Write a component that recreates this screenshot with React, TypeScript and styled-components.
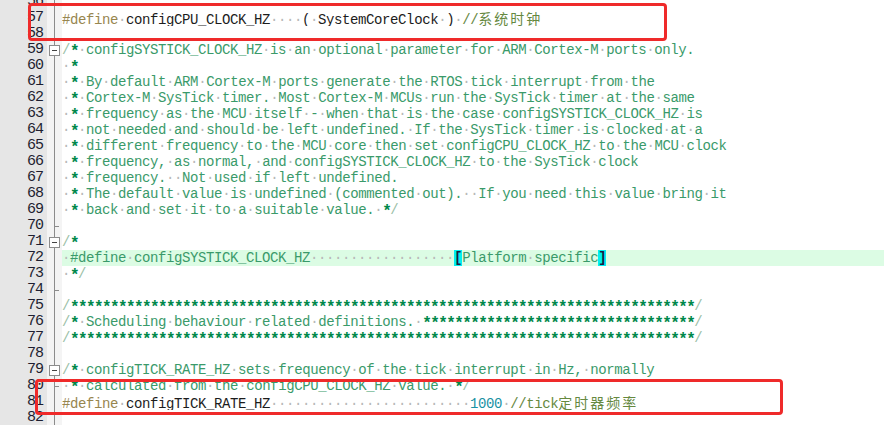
import React from "react";
import styled, { createGlobalStyle } from "styled-components";

const Global = createGlobalStyle`
  html, body { margin: 0; padding: 0; background: #ffffff; }
  body { overflow: hidden; }
`;

type Kind = "c" | "pp" | "id" | "num" | "lc" | "br";
type Seg = [Kind, string];
type Fold = "none" | "box" | "tick";

const COLORS: Record<Kind, string> = {
  c: "#3a9a6a",
  pp: "#97864f",
  id: "#1c1c1c",
  num: "#1892a4",
  lc: "#66893f",
  br: "#1a1a40",
};

const Page = styled.div`
  position: relative;
  width: 884px;
  height: 425px;
  overflow: hidden;
  background: #ffffff;
`;

const Editor = styled.div`
  display: flex;
  flex-direction: column;
  margin-top: -6px;
  font-family: "Liberation Mono", "DejaVu Sans Mono", monospace;
  font-size: 14px;
  letter-spacing: -0.4px;
`;

const Row = styled.div`
  display: grid;
  grid-template-columns: 47px 15px 1fr;
  height: 16px;
  line-height: 16px;
`;

const LineNo = styled.div`
  background: #e6e6e6;
  color: #1e1e30;
  font-size: 15px;
  letter-spacing: -1px;
  text-align: right;
  padding-right: 4px;
  white-space: pre;
`;

const FoldCell = styled.div`
  display: flex;
  align-items: center;
  background: linear-gradient(#8c8c8c, #8c8c8c) no-repeat 7px 0 / 1px 100%,
    #f4f4f4;
`;

const FoldBox = styled.div`
  box-sizing: border-box;
  width: 11px;
  height: 11px;
  margin-left: 2px;
  border: 1px solid #8c8c8c;
  background: #ffffff;
  display: flex;
  align-items: center;
  justify-content: center;
  &::after {
    content: "";
    width: 5px;
    height: 1px;
    background: #444;
  }
`;

const FoldTick = styled.div`
  width: 5px;
  height: 1px;
  margin-left: 7px;
  background: #8c8c8c;
`;

const Code = styled.div<{ $hl?: boolean }>`
  white-space: pre;
  background: ${(p) => (p.$hl ? "#dcfce4" : "transparent")};
  overflow: hidden;
`;

const Tok = styled.span<{ $kind: Kind }>`
  color: ${(p) => COLORS[p.$kind]};
`;

const Ws = styled.span`
  color: #b8b8b8;
`;

const Star = styled.span`
  position: relative;
  top: 2px;
  color: #00884a;
  font-weight: bold;
  font-size: 16px;
  letter-spacing: -1.6px;
`;

const Slash = styled.span`
  color: #9cbfa8;
`;

const Cjk = styled.span<{ $kind: Kind }>`
  font-family: "Noto Sans CJK SC", sans-serif;
  font-size: 14px;
  letter-spacing: 2px;
  color: ${(p) => COLORS[p.$kind]};
`;

const Brace = styled.span`
  display: inline-block;
  height: 16px;
  background: #00f0f0;
  color: #1a1a40;
  font-weight: bold;
`;

const Mark = styled.div<{ $l: number; $t: number; $w: number; $h: number }>`
  position: absolute;
  left: ${(p) => p.$l}px;
  top: ${(p) => p.$t}px;
  width: ${(p) => p.$w}px;
  height: ${(p) => p.$h}px;
  box-sizing: border-box;
  border: 3px solid #ef2a2a;
  border-radius: 4px;
  pointer-events: none;
`;

const isCjk = (ch: string) => /[\u3000-\u9fff\uff00-\uffef]/.test(ch);

function renderSeg(kind: Kind, text: string, key: number) {
  if (kind === "br") {
    return <Brace key={key}>{text}</Brace>;
  }
  const runs: { cls: string; s: string }[] = [];
  for (const ch of text) {
    let cls = "txt";
    if (ch === " ") cls = "ws";
    else if (isCjk(ch)) cls = "cjk";
    else if (kind === "c" && ch === "*") cls = "star";
    else if (kind === "c" && ch === "/") cls = "slash";
    const last = runs[runs.length - 1];
    if (last && last.cls === cls) last.s += ch;
    else runs.push({ cls, s: ch });
  }
  return (
    <React.Fragment key={key}>
      {runs.map((r, i) => {
        if (r.cls === "ws") return <Ws key={i}>{"·".repeat(r.s.length)}</Ws>;
        if (r.cls === "cjk")
          return (
            <Cjk key={i} $kind={kind}>
              {r.s}
            </Cjk>
          );
        if (r.cls === "star") return <Star key={i}>{r.s}</Star>;
        if (r.cls === "slash") return <Slash key={i}>{r.s}</Slash>;
        return (
          <Tok key={i} $kind={kind}>
            {r.s}
          </Tok>
        );
      })}
    </React.Fragment>
  );
}

type Line = { n: number; segs: Seg[]; fold?: Fold; hl?: boolean };

const stars = "*".repeat(78);

const LINES: Line[] = [
  { n: 56, segs: [] },
  {
    n: 57,
    segs: [
      ["pp", "#define"],
      ["id", " configCPU_CLOCK_HZ    ( SystemCoreClock ) "],
      ["lc", "//系统时钟"],
    ],
  },
  { n: 58, segs: [] },
  {
    n: 59,
    fold: "box",
    segs: [["c", "/* configSYSTICK_CLOCK_HZ is an optional parameter for ARM Cortex-M ports only."]],
  },
  { n: 60, segs: [["c", " *"]] },
  { n: 61, segs: [["c", " * By default ARM Cortex-M ports generate the RTOS tick interrupt from the"]] },
  { n: 62, segs: [["c", " * Cortex-M SysTick timer. Most Cortex-M MCUs run the SysTick timer at the same"]] },
  { n: 63, segs: [["c", " * frequency as the MCU itself - when that is the case configSYSTICK_CLOCK_HZ is"]] },
  { n: 64, segs: [["c", " * not needed and should be left undefined. If the SysTick timer is clocked at a"]] },
  { n: 65, segs: [["c", " * different frequency to the MCU core then set configCPU_CLOCK_HZ to the MCU clock"]] },
  { n: 66, segs: [["c", " * frequency, as normal, and configSYSTICK_CLOCK_HZ to the SysTick clock"]] },
  { n: 67, segs: [["c", " * frequency.  Not used if left undefined."]] },
  { n: 68, segs: [["c", " * The default value is undefined (commented out).  If you need this value bring it"]] },
  { n: 69, segs: [["c", " * back and set it to a suitable value. */"]] },
  { n: 70, fold: "tick", segs: [] },
  { n: 71, fold: "box", segs: [["c", "/*"]] },
  {
    n: 72,
    hl: true,
    segs: [
      ["c", " #define configSYSTICK_CLOCK_HZ                  "],
      ["br", "["],
      ["c", "Platform specific"],
      ["br", "]"],
    ],
  },
  { n: 73, segs: [["c", " */"]] },
  { n: 74, fold: "tick", segs: [] },
  { n: 75, segs: [["c", "/" + stars + "/"]] },
  { n: 76, segs: [["c", "/* Scheduling behaviour related definitions. " + "*".repeat(34) + "/"]] },
  { n: 77, segs: [["c", "/" + stars + "/"]] },
  { n: 78, segs: [] },
  {
    n: 79,
    fold: "box",
    segs: [["c", "/* configTICK_RATE_HZ sets frequency of the tick interrupt in Hz, normally"]],
  },
  { n: 80, fold: "tick", segs: [["c", " * calculated from the configCPU_CLOCK_HZ value. */"]] },
  {
    n: 81,
    segs: [
      ["pp", "#define"],
      ["id", " configTICK_RATE_HZ" + " ".repeat(25)],
      ["num", "1000"],
      ["id", " "],
      ["lc", "//tick定时器频率"],
    ],
  },
  { n: 82, segs: [] },
];

function FoldMarker({ fold }: { fold?: Fold }) {
  if (fold === "box") return <FoldBox />;
  if (fold === "tick") return <FoldTick />;
  return null;
}

export default function App() {
  return (
    <Page>
      <Global />
      <Editor>
        {LINES.map((l) => (
          <Row key={l.n}>
            <LineNo>{l.n}</LineNo>
            <FoldCell>
              <FoldMarker fold={l.fold} />
            </FoldCell>
            <Code $hl={l.hl}>{l.segs.map((s, i) => renderSeg(s[0], s[1], i))}</Code>
          </Row>
        ))}
      </Editor>
      <Mark $l={28} $t={3} $w={639} $h={38} />
      <Mark $l={35} $t={379} $w={748} $h={36} />
    </Page>
  );
}
